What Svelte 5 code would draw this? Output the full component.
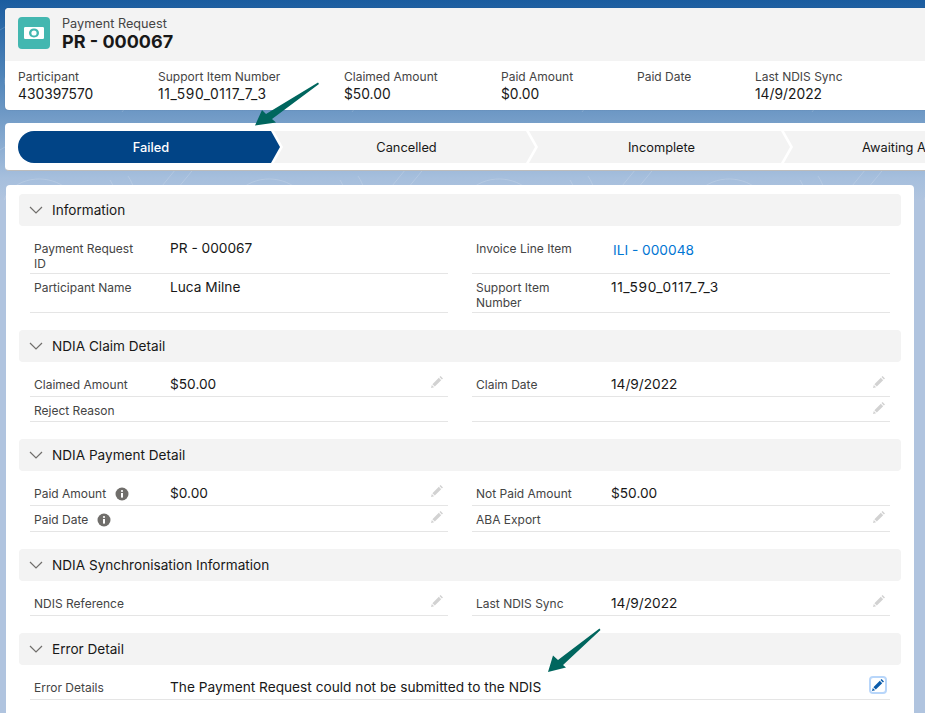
<script lang="ts">
	const highlights = [
		{ label: 'Participant', value: '430397570', width: 140 },
		{ label: 'Support Item Number', value: '11_590_0117_7_3', width: 186, serial: true },
		{ label: 'Claimed Amount', value: '$50.00', width: 157 },
		{ label: 'Paid Amount', value: '$0.00', width: 136 },
		{ label: 'Paid Date', value: '', width: 118 },
		{ label: 'Last NDIS Sync', value: '14/9/2022', width: 140 }
	];

	const steps = ['Failed', 'Cancelled', 'Incomplete', 'Awaiting Approval'];

	const sections = [
		{
			title: 'Information',
			twoLine: true,
			rows: [
				[
					{ label: 'Payment Request ID', value: 'PR - 000067' },
					{ label: 'Invoice Line Item', value: 'ILI - 000048', link: true }
				],
				[
					{ label: 'Participant Name', value: 'Luca Milne' },
					{ label: 'Support Item Number', value: '11_590_0117_7_3', serial: true }
				]
			]
		},
		{
			title: 'NDIA Claim Detail',
			rows: [
				[
					{ label: 'Claimed Amount', value: '$50.00', edit: true },
					{ label: 'Claim Date', value: '14/9/2022', edit: true }
				],
				[
					{ label: 'Reject Reason', value: '' },
					{ label: '', value: '', edit: true }
				]
			]
		},
		{
			title: 'NDIA Payment Detail',
			rows: [
				[
					{ label: 'Paid Amount', value: '$0.00', edit: true, info: true },
					{ label: 'Not Paid Amount', value: '$50.00' }
				],
				[
					{ label: 'Paid Date', value: '', edit: true, info: true, tall: true },
					{ label: 'ABA Export', value: '', edit: true }
				]
			]
		},
		{
			title: 'NDIA Synchronisation Information',
			rows: [
				[
					{ label: 'NDIS Reference', value: '', edit: true },
					{ label: 'Last NDIS Sync', value: '14/9/2022', edit: true }
				]
			]
		}
	];

	const pencil =
		'M10.6 1 13 3.4 11.9 4.5 9.5 2.1ZM8.8 2.8 11.2 5.2 4.8 11.6 2.4 9.2ZM1.8 9.9 4.1 12.2 1 13Z';
</script>

<div class="page">
	<svg class="topo" width="925" height="200" aria-hidden="true">
		<defs>
			<pattern id="contours" width="230" height="120" patternUnits="userSpaceOnUse">
				<g fill="none" stroke="#fff" stroke-width="1">
					<path d="M0 30C30 8 60 48 95 30S150 4 190 26 220 40 230 30" />
					<path d="M10 70c20-18 50-12 62 4s-18 34-42 26S-2 84 10 70Z" />
					<path d="M110 60c10 16 6 32-8 48M128 56c12 18 8 38-6 56" />
					<path d="M150 84c24-16 58-10 80 6M150 104c26-14 54-8 80 4" />
					<circle cx="66" cy="84" r="3" />
					<path d="M180 44l-18 22M196 46l-18 22" />
				</g>
			</pattern>
		</defs>
		<rect width="925" height="200" fill="url(#contours)" />
	</svg>

	<div class="content">
		<header class="highlights">
			<div class="title-bar">
				<span class="object-icon">
					<svg width="20" height="12" viewBox="0 0 20 12" aria-hidden="true">
						<path
							fill="#fff"
							fill-rule="evenodd"
							d="M1.2 0H18.8Q20 0 20 1.2V10.8Q20 12 18.8 12H1.2Q0 12 0 10.8V1.2Q0 0 1.2 0ZM10 1.6C7 1.6 5 3.5 5 6S7 10.4 10 10.4 15 8.5 15 6 13 1.6 10 1.6Z"
						/>
						<circle cx="10" cy="6" r="2.6" fill="#fff" />
					</svg>
				</span>
				<div class="title-text">
					<p class="object-name">Payment Request</p>
					<h1>PR - 000067</h1>
				</div>
			</div>
			<div class="field-strip">
				{#each highlights as item (item.label)}
					<div class="strip-item" style:width="{item.width}px">
						<p>{item.label}</p>
						<strong class:serial={item.serial}>{item.value}</strong>
					</div>
				{/each}
			</div>
		</header>

		<nav class="path-card" aria-label="Status">
			{#each steps as step, i (step)}
				<div class="step" class:current={i === 0}><span>{step}</span></div>
			{/each}
		</nav>

		<main class="detail-card">
			{#each sections as section (section.title)}
				<section>
					<h2>
						<svg width="14" height="8" viewBox="0 0 14 8" aria-hidden="true">
							<path d="M1 1 7 7 13 1" fill="none" stroke="#706e6b" stroke-width="1.2" />
						</svg>
						<span>{section.title}</span>
					</h2>
					<div class="rows" class:two-line={section.twoLine}>
						{#each section.rows as row}
							{#each row as field}
								<div class="field" class:tall={field.tall}>
									<span class="label">
										{field.label}
										{#if field.info}
											<svg class="info" width="14" height="14" viewBox="0 0 14 14" aria-hidden="true">
												<circle cx="7" cy="7" r="6.5" fill="#706e6b" />
												<rect x="6" y="6" width="2" height="4.6" fill="#fff" />
												<circle cx="7" cy="4" r="1.1" fill="#fff" />
											</svg>
										{/if}
									</span>
									<span class="value" class:link={field.link} class:serial={field.serial}>{field.value}</span>
									{#if field.edit}
										<svg class="pencil" width="14" height="14" viewBox="0 0 14 14" aria-hidden="true">
											<path fill="#d2d2d2" d={pencil} />
										</svg>
									{/if}
								</div>
							{/each}
						{/each}
					</div>
				</section>
			{/each}

			<section>
				<h2>
					<svg width="14" height="8" viewBox="0 0 14 8" aria-hidden="true">
						<path d="M1 1 7 7 13 1" fill="none" stroke="#706e6b" stroke-width="1.2" />
					</svg>
					<span>Error Detail</span>
				</h2>
				<div class="rows single">
					<div class="field">
						<span class="label">Error Details</span>
						<span class="value">The Payment Request could not be submitted to the NDIS</span>
						<span class="edit-button">
							<svg width="14" height="14" viewBox="0 0 14 14" aria-hidden="true">
								<path fill="#0b5cab" d={pencil} />
							</svg>
						</span>
					</div>
				</div>
			</section>
		</main>
	</div>

	<!-- annotation arrows drawn over the page -->
	<svg class="arrows" width="925" height="713" aria-hidden="true">
		<path d="M318 82.5 319 84 272 119 276 122.5 255 125.5 262 110 266 114Z" />
		<path d="M599.5 628.5 600.5 630 563 665 566 667.5 548 672 553 655.5 558 660Z" />
	</svg>
</div>

<style>
	:global(body) {
		margin: 0;
	}

	.page {
		position: relative;
		width: 925px;
		height: 713px;
		overflow: hidden;
		font-family: Inter, 'Liberation Sans', sans-serif;
		color: #181818;
		background: linear-gradient(#1a5c9f 0, #4f84b9 75px, #709ac6 115px, #a6bfdd 178px, #b0c4df 200px);
	}

	.topo {
		position: absolute;
		top: 0;
		left: 0;
		opacity: 0.16;
	}

	.arrows {
		position: absolute;
		top: 0;
		left: 0;
		fill: #00665e;
	}

	.content {
		position: relative;
		display: flex;
		flex-direction: column;
		padding: 8px 0 0 5px;
	}

	p,
	h1,
	h2 {
		margin: 0;
	}

	.highlights {
		width: 1000px;
		height: 102px;
		overflow: hidden;
		background: #fff;
		border-radius: 4px;
		box-shadow: 0 0 1px rgb(0 0 0 / 0.3);
	}

	.title-bar {
		display: flex;
		gap: 12px;
		align-items: flex-start;
		height: 53px;
		padding: 9px 13px 0;
		box-sizing: border-box;
		background: #f3f3f3;
	}

	.object-icon {
		display: flex;
		align-items: center;
		justify-content: center;
		width: 32px;
		height: 32px;
		background: #43b7b0;
		border-radius: 4px;
	}

	.title-text {
		margin-top: -1px;
	}

	.object-name {
		font-size: 12.7px;
		line-height: 15px;
		color: #444;
	}

	h1 {
		font-size: 18px;
		line-height: 21px;
		font-weight: 700;
	}

	.field-strip {
		display: flex;
		padding: 8px 13px 0;
	}

	.strip-item p {
		font-size: 12px;
		line-height: 16px;
		color: #444;
	}

	.strip-item strong {
		display: block;
		font-size: 13.8px;
		line-height: 18px;
		font-weight: 400;
	}

	.serial {
		letter-spacing: 0.62px;
	}

	.path-card {
		display: flex;
		flex: none;
		width: 1200px;
		height: 48px;
		margin-top: 13px;
		padding: 8px 13px;
		box-sizing: border-box;
		overflow: hidden;
		background: #fff;
		border-radius: 4px;
		border-bottom: 1px solid #bbb;
	}

	.step {
		display: flex;
		flex: none;
		align-items: center;
		justify-content: center;
		width: 261px;
		height: 32px;
		margin-left: -6px;
		padding-left: 4px;
		box-sizing: border-box;
		font-size: 12.8px;
		background: #f3f3f3;
		clip-path: polygon(0 0, calc(100% - 9px) 0, 100% 50%, calc(100% - 9px) 100%, 0 100%, 9px 50%);
	}

	.step.current {
		width: 262px;
		margin-left: 0;
		color: #fff;
		font-weight: 500;
		background: #014486;
		border-radius: 16px 0 0 16px;
		clip-path: polygon(0 0, calc(100% - 9px) 0, 100% 50%, calc(100% - 9px) 100%, 0 100%);
	}

	.detail-card {
		display: flex;
		flex-direction: column;
		gap: 17px;
		width: 908px;
		height: 540px;
		margin: 14px 0 0 1px;
		padding: 9px 13px 0;
		box-sizing: border-box;
		background: #fff;
		border-radius: 4px 4px 0 0;
	}

	h2 {
		display: flex;
		gap: 9px;
		align-items: center;
		height: 32px;
		padding: 0 0 1px 10px;
		box-sizing: border-box;
		font-size: 13.6px;
		font-weight: 400;
		background: #f3f3f3;
		border-radius: 4px;
	}

	.rows {
		display: grid;
		grid-template-columns: 418px 418px;
		column-gap: 24px;
		padding: 9px 11px 0;
	}

	.rows.single {
		grid-template-columns: 1fr;
	}

	.field {
		position: relative;
		display: grid;
		grid-template-columns: 136px 1fr;
		align-items: start;
		padding: 6px 0 3px 4px;
		border-bottom: 1px solid #e5e5e5;
	}

	.field:nth-child(even) {
		grid-template-columns: 135px 1fr;
	}

	.rows .field:nth-child(-n + 2) {
		padding-bottom: 4px;
	}

	.rows .field.tall {
		padding-bottom: 4px;
	}

	.rows.two-line .field {
		padding-bottom: 2px;
	}

	.label {
		display: flex;
		align-items: center;
		flex-wrap: wrap;
		column-gap: 9px;
		max-width: 112px;
		min-height: 15px;
		font-size: 12px;
		line-height: 15px;
		color: #444;
	}

	.value {
		font-size: 13.7px;
		line-height: 15px;
	}

	.value.link {
		padding: 2px 0 0 2px;
		color: #0176d3;
	}

	.info {
		flex: none;
	}

	.pencil {
		position: absolute;
		top: 4px;
		right: 4px;
	}

	.edit-button {
		position: absolute;
		top: 2px;
		right: 3px;
		display: flex;
		align-items: center;
		justify-content: center;
		width: 14px;
		height: 14px;
		background: #fff;
		border: 2px solid #b8d6fa;
		border-radius: 4px;
	}
</style>
